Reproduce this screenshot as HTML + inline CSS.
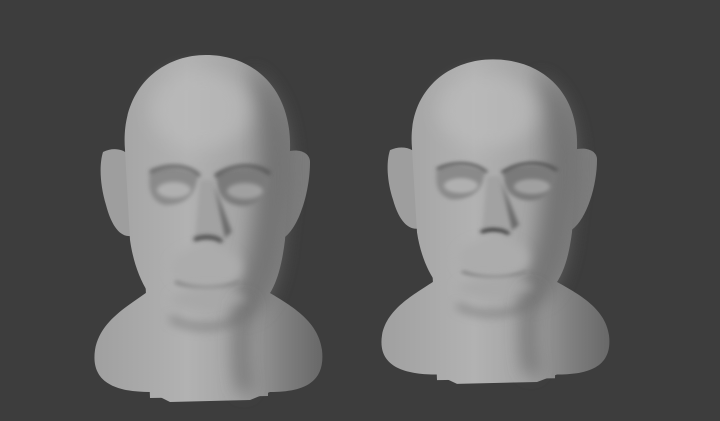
<!DOCTYPE html><html><head><style>html,body{margin:0;padding:0;background:#3d3d3d;width:720px;height:421px;overflow:hidden}</style></head><body>
<svg width="720" height="421" viewBox="0 0 720 421" xmlns="http://www.w3.org/2000/svg">
<defs>
<filter id="b2" filterUnits="userSpaceOnUse" x="0" y="0" width="720" height="421"><feGaussianBlur stdDeviation="2"/></filter>
<filter id="b5" filterUnits="userSpaceOnUse" x="0" y="0" width="720" height="421"><feGaussianBlur stdDeviation="5"/></filter>
<filter id="b9" filterUnits="userSpaceOnUse" x="0" y="0" width="720" height="421"><feGaussianBlur stdDeviation="9"/></filter>
<linearGradient id="sk" gradientUnits="userSpaceOnUse" x1="95" x2="325" y1="0" y2="0">
<stop offset="0" stop-color="#a0a0a0"/><stop offset="0.4" stop-color="#b2b2b2"/><stop offset="0.62" stop-color="#a4a4a4"/><stop offset="0.82" stop-color="#808080"/><stop offset="1" stop-color="#666"/>
</linearGradient>
<g id="head">
<path d="M95 350 C100 320 130 305 150 290 L265 290 C290 305 318 320 322 350 C326 385 300 392 270 392 L250 400 L170 402 L150 392 C120 392 90 385 95 350Z" fill="url(#sk)"/>
<path d="M145 270 L270 270 L268 396 L150 398Z" fill="url(#sk)"/>
<path d="M103 152 C115 146 128 150 132 160 L135 235 C122 240 112 228 106 205 C100 185 99 165 103 152Z" fill="#9e9e9e"/>
<path d="M286 152 C298 148 310 152 310 162 C310 190 300 225 285 237 L280 235Z" fill="#7c7c7c"/>
<path d="M125 150 C120 90 160 55 206 55 C255 55 292 90 290 150 L285 240 C280 280 270 310 235 318 C215 322 195 322 175 318 C150 305 135 275 130 240Z" fill="url(#sk)"/>
<path d="M250 70 C285 95 292 140 288 190 L280 260 C272 300 262 315 240 318 L230 300 C250 270 258 220 262 160 C264 120 260 90 250 70Z" fill="#6e6e6e" filter="url(#b9)" opacity="0.8"/>
<ellipse cx="200" cy="110" rx="50" ry="40" fill="#bcbcbc" filter="url(#b9)" opacity="0.7"/>
<path d="M150 172 C165 165 185 168 198 175 C196 195 185 205 165 205 C152 202 147 190 150 172Z" fill="#8a8a8a" filter="url(#b2)"/>
<path d="M216 175 C230 167 255 166 268 174 C268 195 258 207 240 206 C225 204 216 195 216 175Z" fill="#7a7a7a" filter="url(#b2)"/>
<ellipse cx="174" cy="190" rx="17" ry="8" fill="#b0b0b0" filter="url(#b2)"/>
<ellipse cx="245" cy="191" rx="18" ry="8" fill="#a0a0a0" filter="url(#b2)"/>
<path d="M150 172 C170 162 190 166 200 176" stroke="#5a5a5a" stroke-width="3" fill="none" filter="url(#b2)"/>
<path d="M215 176 C235 162 258 164 270 174" stroke="#4e4e4e" stroke-width="3" fill="none" filter="url(#b2)"/>
<path d="M200 180 L215 180 L222 238 L195 240Z" fill="#a2a2a2" filter="url(#b2)"/>
<path d="M214 185 L225 238 L232 232Z" fill="#6a6a6a" filter="url(#b2)"/>
<path d="M194 240 C202 236 215 236 222 242" stroke="#3e3e3e" stroke-width="4" fill="none" filter="url(#b2)"/>
<ellipse cx="206" cy="268" rx="36" ry="22" fill="#acacac" filter="url(#b5)"/>
<path d="M175 282 C195 290 218 290 240 282" stroke="#888" stroke-width="4" fill="none" filter="url(#b2)"/>
<ellipse cx="208" cy="300" rx="38" ry="12" fill="#a8a8a8" filter="url(#b5)"/>
<path d="M170 318 C190 330 220 330 240 318" stroke="#777" stroke-width="5" fill="none" filter="url(#b5)"/>
<path d="M245 300 C240 330 238 360 245 392" stroke="#606060" stroke-width="10" fill="none" filter="url(#b9)"/>
</g>
</defs>
<use href="#head"/>
<g transform="translate(287,8) scale(1,0.935)"><use href="#head"/></g>
</svg>
</body></html>
